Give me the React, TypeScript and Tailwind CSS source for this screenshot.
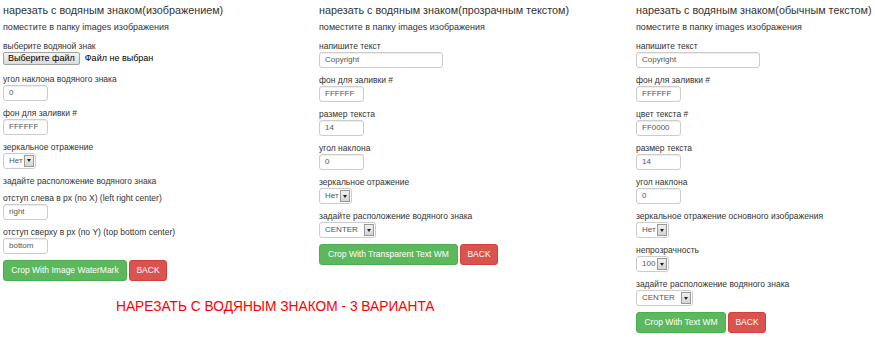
import React from "react";

const font = { fontFamily: '"Liberation Sans", Arial, sans-serif' };

function Label({ children }: { children: React.ReactNode }) {
  return <div className="h-[12px] leading-[12px] text-[8.5px] text-[#333] whitespace-nowrap">{children}</div>;
}

function TextInput({ value, wide }: { value: string; wide?: boolean }) {
  return (
    <div
      className={`${wide ? "w-[124px]" : "w-[45px]"} h-[16px] border border-[#ccc] rounded-[3px] bg-white shadow-[inset_0_1px_1px_rgba(0,0,0,0.075)] flex items-center pl-[5px] text-[8px] text-[#555]`}
    >
      {value}
    </div>
  );
}

function Select({ value, width }: { value: string; width: string }) {
  return (
    <div className={`${width} h-[16px] border border-[#ccc] rounded-[3px] bg-white flex items-stretch text-[8px] text-[#555]`}>
      <div className="flex-1 flex items-center pl-[5px]">{value}</div>
      <div className="w-[10px] my-[1px] mr-[1px] border border-[#999] bg-gradient-to-b from-[#f0f0f0] to-[#d4d4d4] flex items-center justify-center">
        <span className="block w-0 h-0 border-l-[2.5px] border-r-[2.5px] border-t-[3px] border-l-transparent border-r-transparent border-t-[#222]" />
      </div>
    </div>
  );
}

function Field({ label, children }: { label: string; children: React.ReactNode }) {
  return (
    <div className="mb-[6px]">
      <Label>{label}</Label>
      {children}
    </div>
  );
}

function Head({ title }: { title: string }) {
  return (
    <>
      <h3 className="mt-[2px] text-[10.8px] leading-[16px] text-[#333] whitespace-nowrap">{title}</h3>
      <p className="mt-[3px] mb-[7px] text-[9px] leading-[12px] text-[#333] whitespace-nowrap">поместите в папку images изображения</p>
    </>
  );
}

function Buttons({ label, width }: { label: string; width: string }) {
  return (
    <div className="flex gap-[2px]">
      <button className={`${width} h-[21px] rounded-[3px] bg-[#5cb85c] border border-[#4cae4c] text-white text-[8.5px] whitespace-nowrap`}>
        {label}
      </button>
      <button className="w-[38px] h-[21px] rounded-[3px] bg-[#d9534f] border border-[#d43f3a] text-white text-[8.5px]">BACK</button>
    </div>
  );
}

export default function App() {
  return (
    <div className="w-[875px] h-[337px] overflow-hidden bg-white" style={font}>
      <div className="grid grid-cols-[316px_317px_1fr] pl-[3px]">
        <div>
          <Head title="нарезать с водяным знаком(изображением)" />
          <div className="mb-[7px]">
            <Label>выберите водяной знак</Label>
            <div className="flex items-center gap-[5px] text-[9px] text-black">
              <span className="h-[13px] px-[4px] border border-[#a0a0a0] rounded-[2px] bg-gradient-to-b from-[#f4f4f4] to-[#dcdcdc] leading-[11px]">
                Выберите файл
              </span>
              <span>Файл не выбран</span>
            </div>
          </div>
          <Field label="угол наклона водяного знака">
            <TextInput value="0" />
          </Field>
          <Field label="фон для заливки #">
            <TextInput value="FFFFFF" />
          </Field>
          <Field label="зеркальное отражение">
            <Select value="Нет" width="w-[33px]" />
          </Field>
          <div className="mb-[5px]">
            <Label>задайте расположение водяного знака</Label>
          </div>
          <Field label="отступ слева в px (по X) (left right center)">
            <TextInput value="right" />
          </Field>
          <Field label="отступ сверху в px (по Y) (top bottom center)">
            <TextInput value="bottom" />
          </Field>
          <div className="mt-[1px]">
            <Buttons label="Crop With Image WaterMark" width="w-[124px]" />
          </div>
          <div className="mt-[18px] pl-[113px] text-[13.75px] leading-[16px] text-[#ff0000] whitespace-nowrap">
            НАРЕЗАТЬ С ВОДЯНЫМ ЗНАКОМ - 3 ВАРИАНТА
          </div>
        </div>

        <div>
          <Head title="нарезать с водяным знаком(прозрачным текстом)" />
          <Field label="напишите текст">
            <TextInput value="Copyright" wide />
          </Field>
          <Field label="фон для заливки #">
            <TextInput value="FFFFFF" />
          </Field>
          <Field label="размер текста">
            <TextInput value="14" />
          </Field>
          <Field label="угол наклона">
            <TextInput value="0" />
          </Field>
          <Field label="зеркальное отражение">
            <Select value="Нет" width="w-[33px]" />
          </Field>
          <Field label="задайте расположение водяного знака">
            <Select value="CENTER" width="w-[57px]" />
          </Field>
          <Buttons label="Crop With Transparent Text WM" width="w-[139px]" />
        </div>

        <div>
          <Head title="нарезать с водяным знаком(обычным текстом)" />
          <Field label="напишите текст">
            <TextInput value="Copyright" wide />
          </Field>
          <Field label="фон для заливки #">
            <TextInput value="FFFFFF" />
          </Field>
          <Field label="цвет текста #">
            <TextInput value="FF0000" />
          </Field>
          <Field label="размер текста">
            <TextInput value="14" />
          </Field>
          <Field label="угол наклона">
            <TextInput value="0" />
          </Field>
          <Field label="зеркальное отражение основного изображения">
            <Select value="Нет" width="w-[33px]" />
          </Field>
          <Field label="непрозрачность">
            <Select value="100" width="w-[33px]" />
          </Field>
          <Field label="задайте расположение водяного знака">
            <Select value="CENTER" width="w-[57px]" />
          </Field>
          <div className="mt-[1px]">
            <Buttons label="Crop With Text WM" width="w-[90px]" />
          </div>
        </div>
      </div>
    </div>
  );
}
